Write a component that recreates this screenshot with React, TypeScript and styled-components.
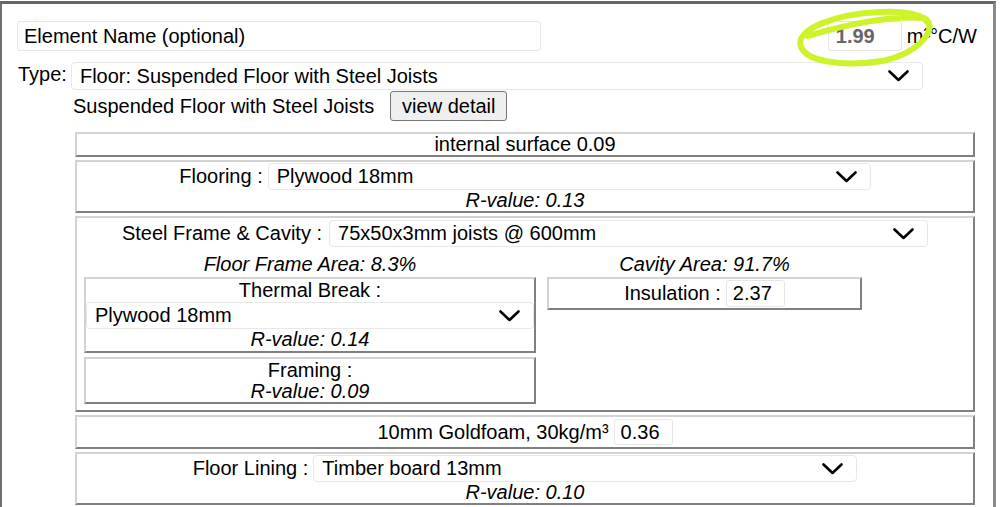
import React from 'react'
import styled, { createGlobalStyle } from 'styled-components'

const GlobalStyle = createGlobalStyle`
  html, body {
    margin: 0;
    padding: 0;
    background: #ffffff;
    overflow: hidden;
  }
  body {
    font-family: 'Liberation Sans', Arial, sans-serif;
    font-size: 20px;
    color: #000;
  }
`

const Page = styled.div`
  position: relative;
  margin-top: 1px;
  width: 996px;
  box-sizing: border-box;
  border-top: 3px solid #666666;
  border-left: 2px solid #6e6e6e;
  border-right: 3px solid #8a8a8a;
  padding: 17px 16px 0 15px;
  height: 540px;
`

const TopRow = styled.div`
  display: flex;
  align-items: center;
  justify-content: space-between;
`

const TextInput = styled.div<{ $w: number; $h?: number; $muted?: boolean }>`
  width: ${(p) => p.$w}px;
  height: ${(p) => p.$h ?? 30}px;
  box-sizing: border-box;
  border: 1px solid #e6e6e6;
  border-radius: 3px;
  display: flex;
  align-items: center;
  padding-left: ${(p) => (p.$muted ? 7 : 6)}px;
  background: #fff;
  color: ${(p) => (p.$muted ? '#666' : '#000')};
  font-weight: ${(p) => (p.$muted ? 700 : 400)};
`

const UnitGroup = styled.div`
  display: flex;
  align-items: center;
  gap: 5px;
`

const TypeRow = styled.div`
  display: flex;
  align-items: flex-start;
  margin-top: 11px;
  gap: 4px;
`

const TypeLabel = styled.span`
  padding-left: 1px;
  line-height: 24px;
`

const SelectBox = styled.div<{ $w?: number; $h?: number; $mt?: number }>`
  ${(p) => (p.$w ? `width: ${p.$w}px;` : 'align-self: stretch;')}
  height: ${(p) => p.$h ?? 27}px;
  margin-top: ${(p) => p.$mt ?? 0}px;
  box-sizing: border-box;
  border: 1px solid #e8e8e8;
  border-radius: 4px;
  display: flex;
  align-items: center;
  justify-content: space-between;
  padding: 0 13px 0 8px;
  background: #fff;
  text-align: left;
`

const DetailRow = styled.div`
  display: flex;
  align-items: center;
  gap: 16px;
  margin-top: 1px;
  padding-left: 56px;
`

const Button = styled.button`
  font: inherit;
  width: 117px;
  height: 30px;
  padding: 0;
  background: #efefef;
  border: 1px solid #767676;
  border-radius: 3px;
  color: #000;
`

const Layers = styled.div`
  display: flex;
  flex-direction: column;
  gap: 3px;
  margin: 11px 0 0 58px;
  width: 900px;
`

const Layer = styled.div<{ $pad?: string }>`
  box-sizing: border-box;
  border-style: solid;
  border-width: 2px;
  border-color: #d2d2d2 #808080 #808080 #d2d2d2;
  text-align: center;
  padding: ${(p) => p.$pad ?? '0'};
`

const InlineRow = styled.div<{ $gap?: number }>`
  display: flex;
  align-items: center;
  justify-content: center;
  gap: ${(p) => p.$gap ?? 5}px;
`

const RValue = styled.div`
  font-style: italic;
  line-height: 21px;
`

const Columns = styled.div`
  display: grid;
  grid-template-columns: 452px 315px;
  column-gap: 11px;
  padding-left: 7px;
  margin-top: 6px;
`

const Column = styled.div`
  display: flex;
  flex-direction: column;
  gap: 4px;
`

const AreaLabel = styled.div`
  font-style: italic;
  line-height: 22px;
  margin-bottom: -2px;
`

const Line = styled.div<{ $lh?: number }>`
  line-height: ${(p) => p.$lh ?? 22}px;
`

const Chevron = () => (
  <svg width="21" height="12" viewBox="0 0 21 12" fill="none">
    <path d="M1.5 1.5 L10.5 10 L19.5 1.5" stroke="#000" strokeWidth="2.6" strokeLinecap="round" strokeLinejoin="round" />
  </svg>
)

const Select = ({ value, w, h, mt }: { value: string; w?: number; h?: number; mt?: number }) => (
  <SelectBox $w={w} $h={h} $mt={mt}>
    <span>{value}</span>
    <Chevron />
  </SelectBox>
)

const Annotation = styled.svg`
  position: absolute;
  left: 0;
  top: -4px;
  pointer-events: none;
`

export default function App() {
  return (
    <>
      <GlobalStyle />
      <Page>
        <TopRow>
          <TextInput $w={524}>Element Name (optional)</TextInput>
          <UnitGroup>
            <TextInput $w={74} $muted>
              1.99
            </TextInput>
            <span>m²°C/W</span>
          </UnitGroup>
        </TopRow>
        <TypeRow>
          <TypeLabel>Type:</TypeLabel>
          <Select value="Floor: Suspended Floor with Steel Joists" w={852} h={28} />
        </TypeRow>
        <DetailRow>
          <span>Suspended Floor with Steel Joists</span>
          <Button>view detail</Button>
        </DetailRow>
        <Layers>
          <Layer>
            <Line $lh={21}>internal surface 0.09</Line>
          </Layer>
          <Layer $pad="1px 0 0">
            <InlineRow>
              <span>Flooring :</span>
              <Select value="Plywood 18mm" w={603} />
            </InlineRow>
            <RValue>R-value: 0.13</RValue>
          </Layer>
          <Layer $pad="2px 0 6px">
            <InlineRow $gap={7}>
              <span>Steel Frame &amp; Cavity :</span>
              <Select value="75x50x3mm joists @ 600mm" w={599} />
            </InlineRow>
            <Columns>
              <Column>
                <AreaLabel>Floor Frame Area: 8.3%</AreaLabel>
                <Layer $pad="0 0 1px">
                  <Line>Thermal Break :</Line>
                  <Select value="Plywood 18mm" h={27} mt={1} />
                  <RValue>R-value: 0.14</RValue>
                </Layer>
                <Layer>
                  <Line>Framing :</Line>
                  <RValue>R-value: 0.09</RValue>
                </Layer>
              </Column>
              <Column>
                <AreaLabel>Cavity Area: 91.7%</AreaLabel>
                <Layer $pad="1px 0">
                  <InlineRow>
                    <span>Insulation :</span>
                    <TextInput $w={59} $h={27}>2.37</TextInput>
                  </InlineRow>
                </Layer>
              </Column>
            </Columns>
          </Layer>
          <Layer $pad="2px 0">
            <InlineRow>
              <span>10mm Goldfoam, 30kg/m³</span>
              <TextInput $w={59} $h={26}>0.36</TextInput>
            </InlineRow>
          </Layer>
          <Layer $pad="1px 0 0">
            <InlineRow>
              <span>Floor Lining :</span>
              <Select value="Timber board 13mm" w={544} />
            </InlineRow>
            <RValue>R-value: 0.10</RValue>
          </Layer>
        </Layers>
        <Annotation width="1000" height="80" viewBox="0 0 1000 80">
          <path
            d="M806 36 C845 24 892 15 922 18 C938 26 918 54 880 61 C850 66 806 64 799 47 C792 30 832 14 878 12 C902 11 920 14 925 22"
            stroke="#cdf32a"
            strokeWidth="6"
            fill="none"
            strokeLinecap="round"
          />
        </Annotation>
      </Page>
    </>
  )
}
